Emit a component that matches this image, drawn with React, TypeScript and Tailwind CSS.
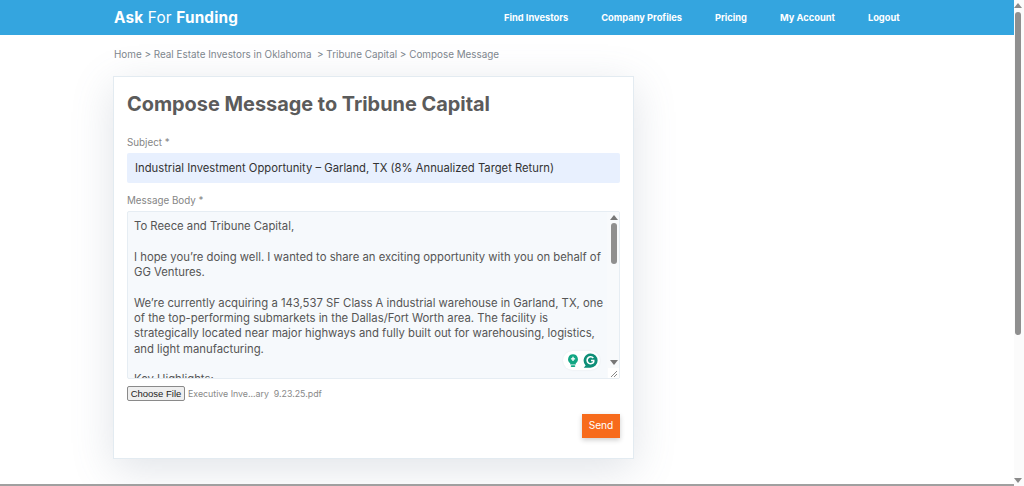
const font = "font-['Inter','Liberation_Sans',sans-serif]";

function Bubble() {
  return (
    <div className="absolute left-[435px] top-[139px] flex h-[19px] w-[37px] items-center justify-center gap-[3px] rounded-[10px] bg-white shadow-[0_0_2px_rgba(0,0,0,0.08)]">
      <svg width="14" height="15" viewBox="0 0 16 16">
        <path d="M8 .8a5.6 5.6 0 0 0-3.2 10.2v1.6h6.4V11A5.6 5.6 0 0 0 8 .8z" fill="#11a683" />
        <rect x="5.4" y="13.4" width="5.2" height="2" rx="1" fill="#11a683" />
        <path d="M8 3.8v4.8M5.6 6.2h4.8" stroke="#fff" strokeWidth="1.5" />
      </svg>
      <svg width="15" height="15" viewBox="0 0 16 16">
        <path d="M8 .4a7.6 7.6 0 1 1 0 15.2H.8l2-2.4A7.6 7.6 0 0 1 8 .4z" fill="#0f8f78" />
        <path d="M11 5.4A3.7 3.7 0 1 0 11.4 9.4V8H8.6" fill="none" stroke="#fff" strokeWidth="1.7" />
      </svg>
    </div>
  );
}

function TextareaScrollbar() {
  return (
    <div className="flex w-[12px] shrink-0 flex-col items-center bg-[#f8fafc] pl-[1px]">
      <div className="mt-[3px] h-0 w-0 border-x-[4px] border-b-[5px] border-x-transparent border-b-[#777]" />
      <div className="mt-[3px] h-[41px] w-[6px] rounded-[3px] bg-[#8f8f8f]" />
      <div className="flex-1" />
      <div className="mb-[3px] h-0 w-0 border-x-[4px] border-t-[5px] border-x-transparent border-t-[#777]" />
      <div className="flex h-[10px] w-full items-end justify-end bg-white pr-[1px]">
        <svg width="8" height="8" viewBox="0 0 8 8">
          <path d="M1 7 7 1M4 7l3-3" stroke="#888" strokeWidth="1" />
        </svg>
      </div>
    </div>
  );
}

export default function App() {
  return (
    <div className={`${font} flex h-[486px] w-[1024px] overflow-hidden bg-white`}>
      <div className="flex h-full w-[1014px] flex-col overflow-hidden border-b-2 border-[#a0a0a0]">
        <header className="h-[35px] shrink-0 bg-[#34a5df] pl-[114px] text-white">
          <div className="flex h-full items-center">
            <div className="w-[369px] text-[15.3px] leading-none tracking-[0.2px]">
              <span className="font-bold">Ask</span> For <span className="font-bold">Funding</span>
            </div>
            <nav className="ml-[21px] flex gap-[33px] text-[9.3px] font-bold">
              <span>Find Investors</span>
              <span>Company Profiles</span>
              <span>Pricing</span>
              <span>My Account</span>
              <span>Logout</span>
            </nav>
          </div>
        </header>
        <main className="flex-1 overflow-hidden pl-[113px]">
          <div className="mt-[13px] flex h-[13px] items-center whitespace-pre pl-[1px] text-[9.9px] leading-none text-[#7d868d]">
            {"Home > Real Estate Investors in Oklahoma  > Tribune Capital > Compose Message"}
          </div>
          <section className="mt-[15px] h-[383px] w-[521px] border border-[#e3ebf1] bg-white px-[13px] pt-[14px] shadow-[0_10px_40px_rgba(100,116,139,0.2)]">
            <h1 className="text-[19.9px] font-bold leading-[26px] text-[#5b5b5b]">
              Compose Message to Tribune Capital
            </h1>
            <label className="mt-[19px] block text-[9.8px] leading-[13px] text-[#858585]">Subject *</label>
            <div className="mt-[4px] flex h-[30px] w-[493px] items-center rounded-[2px] bg-[#e8f0fe] px-[8px] text-[11.25px] text-[#333]">
              Industrial Investment Opportunity – Garland, TX (8% Annualized Target Return)
            </div>
            <label className="mt-[11px] block text-[9.8px] leading-[13px] text-[#858585]">Message Body *</label>
            <div className="relative mt-[4px] flex h-[168px] w-[493px] overflow-hidden rounded-[2px] border border-[#e6edf3] bg-[#f6f9fc]">
              <div className="flex-1 overflow-hidden pl-[6px] pt-[7px] text-[11.3px] leading-[15.33px] text-[#555]">
                <p>To Reece and Tribune Capital,</p>
                <p className="mt-[15.33px]">
                  I hope you’re doing well. I wanted to share an exciting opportunity with you on behalf of GG Ventures.
                </p>
                <p className="mt-[15.33px]">
                  We’re currently acquiring a 143,537 SF Class A industrial warehouse in Garland, TX, one of the top-performing submarkets in the Dallas/Fort Worth area. The facility is strategically located near major highways and fully built out for warehousing, logistics, and light manufacturing.
                </p>
                <p className="mt-[15.33px]">Key Highlights:</p>
              </div>
              <TextareaScrollbar />
              <Bubble />
            </div>
            <div className="mt-[7px] flex h-[15px] items-center gap-[3px]">
              <span className="flex h-[15px] w-[58px] items-center justify-center rounded-[2px] border border-[#8a8a8a] bg-[#efefef] font-['Liberation_Sans',sans-serif] text-[9.5px] leading-none text-[#222]">
                Choose File
              </span>
              <span className="whitespace-pre text-[8.8px] text-[#888]">Executive Inve...ary  9.23.25.pdf</span>
            </div>
            <div className="mt-[13px] flex w-[493px] justify-end">
              <button className="h-[24px] w-[38px] bg-[#f76b1c] text-[10.2px] text-white shadow-[0_2px_5px_rgba(0,0,0,0.2)]">
                Send
              </button>
            </div>
          </section>
        </main>
      </div>
      <div className="flex h-full w-[10px] flex-col items-center bg-[#fbfbfb] pr-[2px]">
        <div className="mt-[3px] h-0 w-0 border-x-[4px] border-b-[5px] border-x-transparent border-b-[#8a8a8a]" />
        <div className="mt-[4px] h-[323px] w-[6px] rounded-[3px] bg-[#8f8f8f]" />
        <div className="flex-1" />
        <div className="mb-[3px] h-0 w-0 border-x-[4px] border-t-[5px] border-x-transparent border-t-[#8a8a8a]" />
      </div>
    </div>
  );
}
